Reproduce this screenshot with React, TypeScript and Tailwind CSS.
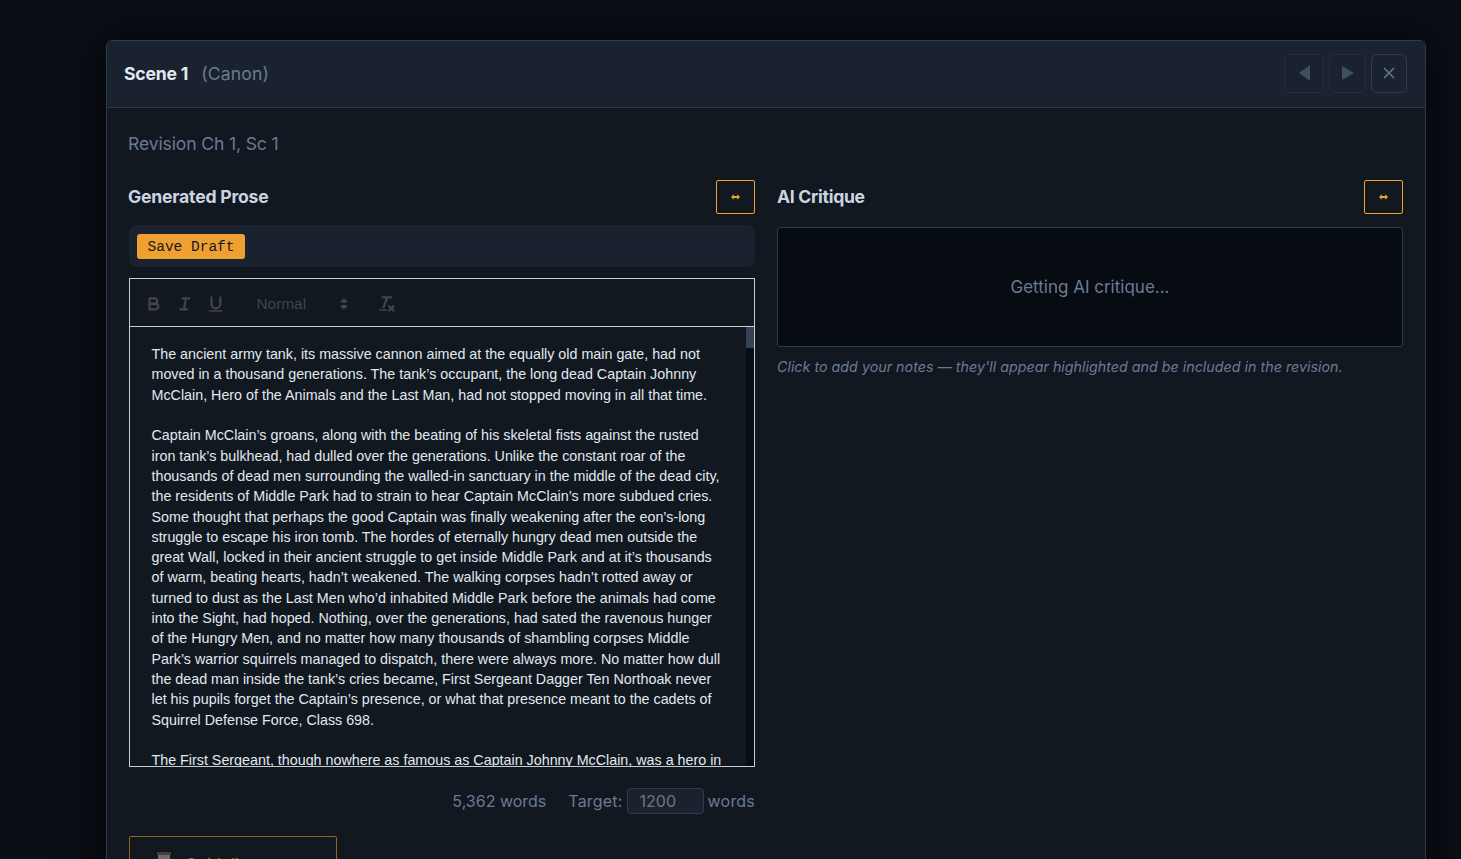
const sans = "font-['Inter','Liberation_Sans',sans-serif]";

const ToolIcon = ({ children }: { children: React.ReactNode }) => (
  <span className="flex h-[26.4px] w-[30.8px] items-center justify-center">
    <svg
      viewBox="0 0 18 18"
      width="19.8"
      height="19.8"
      fill="none"
      stroke="#444444"
      strokeWidth="2"
      strokeLinecap="round"
      strokeLinejoin="round"
    >
      {children}
    </svg>
  </span>
);

const ExpandButton = () => (
  <button className="flex h-[34px] w-[39px] items-center justify-center rounded-[2px] border border-[#f0a030]">
    <svg viewBox="0 0 10 6" width="9" height="6" fill="#f0a030">
      <path d="M0 3 L3 0 V1.8 H7 V0 L10 3 L7 6 V4.2 H3 V6 Z" />
    </svg>
  </button>
);

const paragraphs = [
  "The ancient army tank, its massive cannon aimed at the equally old main gate, had not moved in a thousand generations. The tank\u2019s occupant, the long dead Captain Johnny McClain, Hero of the Animals and the Last Man, had not stopped moving in all that time.",
  "Captain McClain\u2019s groans, along with the beating of his skeletal fists against the rusted iron tank\u2019s bulkhead, had dulled over the generations. Unlike the constant roar of the thousands of dead men surrounding the walled-in sanctuary in the middle of the dead city, the residents of Middle Park had to strain to hear Captain McClain\u2019s more subdued cries. Some thought that perhaps the good Captain was finally weakening after the eon\u2019s-long struggle to escape his iron tomb. The hordes of eternally hungry dead men outside the great Wall, locked in their ancient struggle to get inside Middle Park and at it\u2019s thousands of warm, beating hearts, hadn\u2019t weakened. The walking corpses hadn\u2019t rotted away or turned to dust as the Last Men who\u2019d inhabited Middle Park before the animals had come into the Sight, had hoped. Nothing, over the generations, had sated the ravenous hunger of the Hungry Men, and no matter how many thousands of shambling corpses Middle Park\u2019s warrior squirrels managed to dispatch, there were always more. No matter how dull the dead man inside the tank\u2019s cries became, First Sergeant Dagger Ten Northoak never let his pupils forget the Captain\u2019s presence, or what that presence meant to the cadets of Squirrel Defense Force, Class 698.",
  "The First Sergeant, though nowhere as famous as Captain Johnny McClain, was a hero in his own right.",
];

export default function App() {
  return (
    <div className={`h-screen overflow-hidden bg-[#0a0f16] pl-[106px] pr-[35px] pt-10 ${sans}`}>
      <div className="rounded-t-md border border-b-0 border-[#2d3b4e] bg-[#111820] shadow-[0_0_50px_rgba(0,0,0,0.75)]">
        {/* Header */}
        <div className="flex h-[67px] items-center justify-between border-b border-[#2d3b4e] bg-[#1a2230] pl-[17px] pr-[18px]">
          <div className="flex items-baseline gap-[13px]">
            <span className="text-[17.6px] font-bold tracking-[-0.2px] text-[#e2e8f0]">Scene 1</span>
            <span className="text-[17.6px] tracking-[0.15px] text-[#6b7b93]">(Canon)</span>
          </div>
          <div className="mb-[2px] flex items-center gap-[5px]">
            <button className="flex h-[39px] w-[40px] items-center justify-center rounded-md border border-[#232e3e]">
              <svg viewBox="0 0 11 16" width="11" height="16" fill="#3f4f63">
                <path d="M11 0 V16 L0 8 Z" />
              </svg>
            </button>
            <button className="flex h-[39px] w-[37px] items-center justify-center rounded-md border border-[#232e3e]">
              <svg viewBox="0 0 12 14" width="12" height="14" fill="#3f4f63">
                <path d="M0 0 V14 L12 7 Z" />
              </svg>
            </button>
            <button className="flex h-[39px] w-[36px] items-center justify-center rounded-md border border-[#2d3b4e]">
              <svg viewBox="0 0 12 12" width="12" height="12" stroke="#64748b" strokeWidth="1.6">
                <path d="M1 1 L11 11 M11 1 L1 11" />
              </svg>
            </button>
          </div>
        </div>

        {/* Body */}
        <div className="px-[22px] pt-[23px]">
          <h1 className="-ml-px text-[17.6px] leading-[26px] tracking-[-0.15px] text-[#6b7b93]">Revision Ch 1, Sc 1</h1>

          <div className="mt-[23px] grid grid-cols-2 gap-[22px]">
            {/* Left column */}
            <div>
              <div className="flex h-[34px] items-center justify-between">
                <h2 className="-ml-px text-[17.6px] font-bold tracking-[-0.2px] text-[#cbd5e1]">Generated Prose</h2>
                <ExpandButton />
              </div>

              <div className="mt-[11px] flex h-[42px] items-center rounded-lg bg-[#1a2230] pl-2">
                <button className="h-[25px] w-[108px] rounded-[3px] bg-[#f0a030] pt-[2px] font-['Liberation_Mono',monospace] text-[14.5px] leading-[20px] text-[#111820]">
                  Save Draft
                </button>
              </div>

              {/* Editor */}
              <div className="mt-[11px] h-[489px] border border-[#cccccc] font-['Liberation_Sans',Arial,sans-serif]">
                <div className="flex h-[48px] items-center border-b border-[#cccccc] pl-[8.8px] pt-[2px]">
                  <ToolIcon>
                    <path d="M5,4H9.5A2.5,2.5,0,0,1,12,6.5v0A2.5,2.5,0,0,1,9.5,9H5V4Z" />
                    <path d="M5,9h5.5A2.5,2.5,0,0,1,13,11.5v0A2.5,2.5,0,0,1,10.5,14H5V9Z" />
                  </ToolIcon>
                  <ToolIcon>
                    <path d="M7 4H13 M5 14H11 M8 14L10 4" />
                  </ToolIcon>
                  <ToolIcon>
                    <path d="M5,3V9a4,4,0,0,0,4,4H9a4,4,0,0,0,4-4V3" />
                    <rect x="3" y="15" width="12" height="1" rx="0.5" fill="#444444" strokeWidth="0.5" />
                  </ToolIcon>
                  <div className="ml-[16.5px] flex h-[26.4px] w-[107.8px] items-center justify-between pl-[8.8px] pr-[2px]">
                    <span className="text-[15.4px] font-medium text-[#444444]">Normal</span>
                    <svg viewBox="0 0 18 18" width="19.8" height="19.8" fill="#444444" stroke="#444444" strokeWidth="2" strokeLinejoin="round">
                      <polygon points="7 11 9 13 11 11 7 11" />
                      <polygon points="7 7 9 5 11 7 7 7" />
                    </svg>
                  </div>
                  <div className="ml-[16.5px]">
                    <ToolIcon>
                      <path d="M5 3H13 M6 12L9.35 3 M11 11L15 15 M15 11L11 15" />
                      <rect x="2" y="14" width="7" height="1" rx="0.5" fill="#444444" strokeWidth="0.5" />
                    </ToolIcon>
                  </div>
                </div>
                <div className="flex h-[439px]">
                  <div className="min-w-0 flex-1 overflow-hidden pl-[21.5px] pr-[23px] pt-[17.2px] text-[14.3px] leading-[20.3px] text-[#e2e8f0]">
                    {paragraphs.map((p) => (
                      <p key={p} className="mb-[20.3px]">
                        {p}
                      </p>
                    ))}
                  </div>
                  <div className="w-[8px] shrink-0 bg-[#080c13]">
                    <div className="h-[21px] bg-[#334155]" />
                  </div>
                </div>
              </div>

              {/* Word count */}
              <div className="mt-[21px] flex h-[26px] items-center justify-end text-[16px] text-[#6b7b93]">
                <span>5,362 words</span>
                <span className="ml-[22px] tracking-[0.2px]">Target:</span>
                <input
                  readOnly
                  value="1200"
                  className="mx-[4px] h-[26px] w-[77px] rounded-[4px] border border-[#2d3b4e] bg-[#1a2230] px-[12px] text-[16px] text-[#757575] outline-none"
                />
                <span className="tracking-[0.2px]">words</span>
              </div>

              <button className="mt-[22px] flex h-[52px] w-[208px] items-start gap-[14px] rounded-[2px] border border-[#8f6425] pl-[27px] pt-[15px] text-[16px] font-semibold text-[#8f6425]">
                <svg viewBox="0 0 14 20" width="14" height="20">
                  <rect x="0" y="0" width="14" height="3" fill="#4a3a32" />
                  <rect x="1" y="3" width="12" height="17" fill="#6b6d70" />
                </svg>
                <span>Guidelines</span>
              </button>
            </div>

            {/* Right column */}
            <div>
              <div className="flex h-[34px] items-center justify-between">
                <h2 className="text-[17.6px] font-bold tracking-[-0.3px] text-[#cbd5e1]">AI Critique</h2>
                <ExpandButton />
              </div>
              <div className="mt-[13px] flex h-[120px] items-center justify-center rounded-[3px] border border-[#2d3b4e] bg-[#070b12] pt-[2px] text-[17px] text-[#6b7b93]">
                Getting AI critique...
              </div>
              <p className="mt-[11px] text-[14.3px] italic leading-[18px] text-[#6b7b93]">
                Click to add your notes — they'll appear highlighted and be included in the revision.
              </p>
            </div>
          </div>
        </div>
      </div>
    </div>
  );
}
